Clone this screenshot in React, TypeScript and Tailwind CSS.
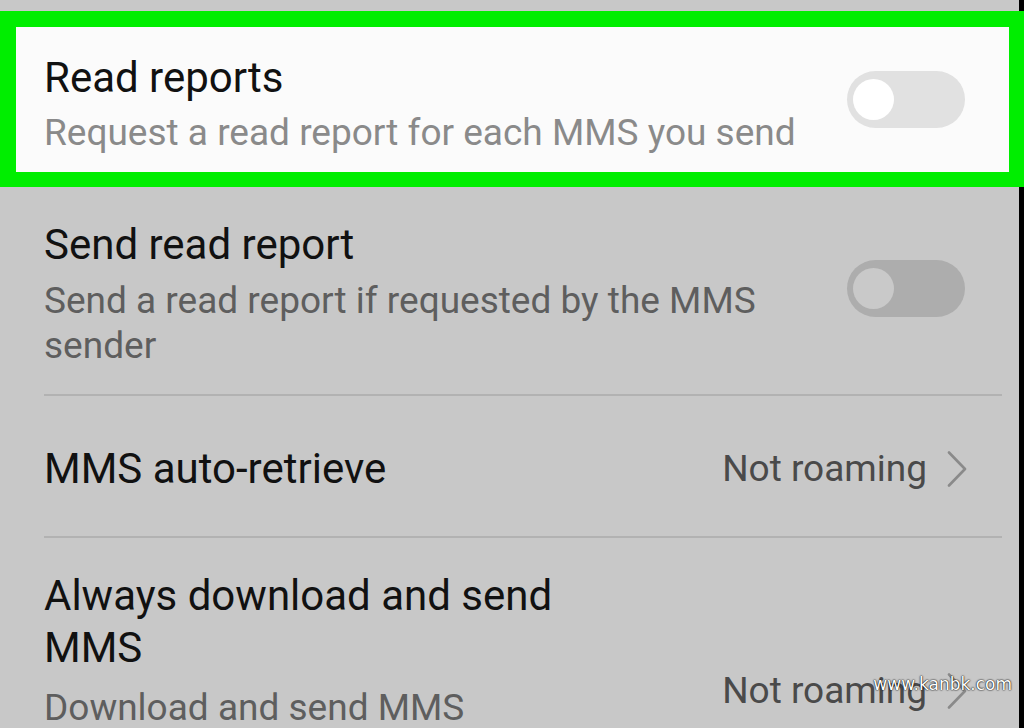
import React from "react";

const font = { fontFamily: "Roboto, 'Noto Sans', sans-serif" };

function Toggle({ track, knob }: { track: string; knob: string }) {
  return (
    <div className={`w-[118px] h-[57px] rounded-full ${track} flex items-center pl-[6px] shrink-0`}>
      <div className={`w-[41px] h-[41px] rounded-full ${knob}`} />
    </div>
  );
}

function Chevron() {
  return (
    <svg width="20" height="36" viewBox="0 0 20 36" className="shrink-0 -mr-[2px]">
      <path d="M2 1.5 L18 18 L2 34.5" fill="none" stroke="#8a8a8a" strokeWidth="2.6" strokeLinecap="round" strokeLinejoin="round" />
    </svg>
  );
}

export default function App() {
  return (
    <div className="w-[1024px] h-[728px] bg-[#c8c8c8] overflow-hidden relative flex flex-col" style={font}>
      {/* top gap */}
      <div className="h-[11px] shrink-0 border-r-[5px] border-black" />

      {/* highlighted row */}
      <div className="shrink-0 bg-[#00ee00] pl-[16px] pt-[16px] pr-[15px] pb-[15px]">
        <div className="h-[145px] bg-[#fbfbfb] flex items-center pl-[28px] pr-[44px]">
          <div className="flex-1 pt-[8px]">
            <div className="text-[42px] leading-[52px] text-[#111111]">Read reports</div>
            <div className="text-[37px] leading-[46px] text-[#8a8a8a] mt-[6px]">Request a read report for each MMS you send</div>
          </div>
          <Toggle track="bg-[#e1e1e1]" knob="bg-white" />
        </div>
      </div>

      {/* rest */}
      <div className="flex-1 border-r-[5px] border-black pl-[44px] pr-[17px]">
        {/* Send read report */}
        <div className="flex items-start pt-[32px] pb-[26px] border-b-2 border-[#b2b2b2] pr-[37px]">
          <div className="flex-1">
            <div className="text-[42px] leading-[52px] text-[#111111]">Send read report</div>
            <div className="text-[37px] leading-[45px] text-[#5e5e5e] mt-[7px] max-w-[740px]">Send a read report if requested by the MMS sender</div>
          </div>
          <div className="mt-[41px]">
            <Toggle track="bg-[#adadad]" knob="bg-[#c9c9c9]" />
          </div>
        </div>

        {/* MMS auto-retrieve */}
        <div className="h-[142px] flex items-center pt-[6px] border-b-2 border-[#b2b2b2] pr-[37px]">
          <div className="flex-1 text-[42px] leading-[52px] text-[#111111]">MMS auto-retrieve</div>
          <div className="flex items-center gap-[20px]">
            <span className="text-[37px] leading-[46px] text-[#4a4a4a]">Not roaming</span>
            <Chevron />
          </div>
        </div>

        {/* Always download */}
        <div className="flex items-start pt-[32px] pr-[37px]">
          <div className="flex-1">
            <div className="text-[42px] leading-[52px] text-[#111111] max-w-[560px]">Always download and send MMS</div>
            <div className="text-[37px] leading-[46px] text-[#5e5e5e] mt-[11px]">Download and send MMS</div>
          </div>
          <div className="flex items-center gap-[20px] mt-[98px]">
            <span className="text-[37px] leading-[46px] text-[#4a4a4a]">Not roaming</span>
            <Chevron />
          </div>
        </div>
      </div>

      <div
        className="absolute right-[12px] bottom-[34px] text-[17px] leading-[20px] text-white [text-shadow:_0_0_2px_#000,_0_0_1px_#000]"
        style={{ fontFamily: "'DejaVu Sans', sans-serif" }}
      >
        www.kanbk.com
      </div>
    </div>
  );
}
